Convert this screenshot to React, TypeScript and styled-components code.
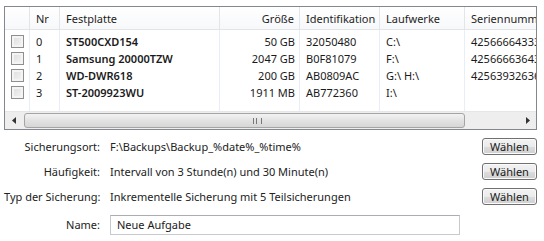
import styled, { createGlobalStyle } from "styled-components";

const Global = createGlobalStyle`
  html, body { margin: 0; padding: 0; background: #fff; }
  body { font-family: "Noto Sans", "Open Sans", sans-serif; font-size: 11px; color: #1a1a1a; }
`;

const Page = styled.div`
  width: 544px;
  height: 241px;
  padding: 6px 7px 0 4px;
  box-sizing: border-box;
  overflow: hidden;
`;

const ListBox = styled.div`
  height: 124px;
  border: 1px solid #828790;
  box-sizing: border-box;
  display: flex;
  flex-direction: column;
  overflow: hidden;
`;

const cols = "25px 30px 160px 80px 80px 85px 90px";

const HeaderRow = styled.div`
  display: grid;
  grid-template-columns: ${cols};
  height: 22px;
  background: linear-gradient(#ffffff, #f7f8fa);
  border-bottom: 1px solid #e2e4e8;
  flex-shrink: 0;
`;

const HeadCell = styled.div<{ $right?: boolean }>`
  display: flex;
  align-items: center;
  justify-content: ${(p) => (p.$right ? "flex-end" : "flex-start")};
  padding: 0 5px 0 6px;
  border-right: 1px solid #e3e5e8;
  color: #1e1e1e;
  white-space: nowrap;
  overflow: hidden;
`;

const Body = styled.div`
  flex: 1;
  padding-top: 3px;
  display: flex;
  flex-direction: column;
  position: relative;
`;

const Row = styled.div`
  display: grid;
  grid-template-columns: ${cols};
  height: 17px;
`;

const Cell = styled.div<{ $right?: boolean; $bold?: boolean }>`
  display: flex;
  align-items: center;
  justify-content: ${(p) => (p.$right ? "flex-end" : "flex-start")};
  padding: 0 5px 0 6px;
  font-weight: ${(p) => (p.$bold ? 600 : 400)};
  white-space: nowrap;
  overflow: hidden;
`;

const Guides = styled.div`
  position: absolute;
  inset: 0;
  display: grid;
  grid-template-columns: ${cols};
  pointer-events: none;
  & > div { border-right: 1px solid #e8eef8; }
`;

const Check = styled.span`
  width: 13px;
  height: 13px;
  box-sizing: border-box;
  border: 1px solid #8e8f8f;
  background: linear-gradient(135deg, #dcdcdc, #f6f6f6);
  box-shadow: inset 0 0 0 2px #f4f4f4;
  display: block;
`;

const CheckCell = styled.div`
  display: flex;
  align-items: center;
  padding-left: 6px;
`;

const HScroll = styled.div`
  height: 17px;
  flex-shrink: 0;
  background: #eeeeee;
  border-top: 1px solid #e6e6e6;
  display: flex;
  align-items: center;
`;

const Arrow = styled.div`
  width: 17px;
  height: 17px;
  display: flex;
  align-items: center;
  justify-content: center;
`;

const Thumb = styled.div`
  flex: 1;
  height: 15px;
  margin: 0 54px 0 2px;
  border: 1px solid #a4a4a4;
  border-radius: 3px;
  box-sizing: border-box;
  background: linear-gradient(#f3f3f3, #e2e2e2 50%, #d6d6d6);
  display: flex;
  align-items: center;
  justify-content: center;
`;

const Grip = styled.div`
  width: 7px;
  height: 6px;
  border-left: 1px solid #777;
  border-right: 1px solid #777;
  position: relative;
  margin-left: 25px;
  &::after {
    content: "";
    position: absolute;
    left: 2px;
    top: 0;
    height: 6px;
    border-left: 1px solid #777;
  }
`;

const Form = styled.div`
  display: grid;
  grid-template-columns: 96px 1fr 55px;
  column-gap: 10px;
  margin-top: 4px;
`;

const Label = styled.div<{ $h?: number }>`
  text-align: right;
  height: ${(p) => p.$h ?? 25}px;
  line-height: ${(p) => p.$h ?? 25}px;
  white-space: nowrap;
  color: #222;
`;

const Value = styled.div<{ $h?: number }>`
  height: ${(p) => p.$h ?? 25}px;
  line-height: ${(p) => p.$h ?? 25}px;
  white-space: nowrap;
  color: #222;
`;

const BtnCell = styled.div`
  display: flex;
  align-items: center;
`;

const Button = styled.button`
  width: 55px;
  height: 17px;
  padding: 0;
  font: inherit;
  color: #1a1a1a;
  border: 1px solid #707070;
  border-radius: 3px;
  background: linear-gradient(#f2f2f2, #ebebeb 50%, #dddddd 51%, #cfcfcf);
  box-shadow: inset 0 0 0 1px #fbfbfb;
`;

const InputCell = styled.div`
  height: 32px;
  display: flex;
  align-items: center;
`;

const Input = styled.div`
  width: 350px;
  height: 20px;
  box-sizing: border-box;
  border: 1px solid #c5c9d0;
  border-top-color: #abadb3;
  padding-left: 6px;
  line-height: 18px;
  color: #1a1a1a;
`;

const disks = [
  { nr: "0", name: "ST500CXD154", size: "50 GB", id: "32050480", drv: "C:\\", sn: "4256666433399" },
  { nr: "1", name: "Samsung 20000TZW", size: "2047 GB", id: "B0F81079", drv: "F:\\", sn: "4256666364312" },
  { nr: "2", name: "WD-DWR618", size: "200 GB", id: "AB0809AC", drv: "G:\\  H:\\", sn: "4256393263610" },
  { nr: "3", name: "ST-2009923WU", size: "1911 MB", id: "AB772360", drv: "I:\\", sn: "" },
];

export default function App() {
  return (
    <Page>
      <Global />
      <ListBox>
        <HeaderRow>
          <HeadCell />
          <HeadCell>Nr</HeadCell>
          <HeadCell>Festplatte</HeadCell>
          <HeadCell $right>Größe</HeadCell>
          <HeadCell>Identifikation</HeadCell>
          <HeadCell>Laufwerke</HeadCell>
          <HeadCell>Seriennummer</HeadCell>
        </HeaderRow>
        <Body>
          <Guides>
            <div /><div /><div /><div /><div /><div />
          </Guides>
          {disks.map((d) => (
            <Row key={d.nr}>
              <CheckCell>
                <Check />
              </CheckCell>
              <Cell>{d.nr}</Cell>
              <Cell $bold>{d.name}</Cell>
              <Cell $right>{d.size}</Cell>
              <Cell>{d.id}</Cell>
              <Cell>{d.drv}</Cell>
              <Cell>{d.sn}</Cell>
            </Row>
          ))}
        </Body>
        <HScroll>
          <Arrow>
            <svg width="4" height="7" viewBox="0 0 4 7">
              <path d="M4 0 L0 3.5 L4 7 Z" fill="#333" />
            </svg>
          </Arrow>
          <Thumb>
            <Grip />
          </Thumb>
          <Arrow>
            <svg width="4" height="7" viewBox="0 0 4 7">
              <path d="M0 0 L4 3.5 L0 7 Z" fill="#333" />
            </svg>
          </Arrow>
        </HScroll>
      </ListBox>
      <Form>
        <Label>Sicherungsort:</Label>
        <Value>F:\Backups\Backup_%date%_%time%</Value>
        <BtnCell>
          <Button>Wählen</Button>
        </BtnCell>
        <Label>Häufigkeit:</Label>
        <Value>Intervall von 3 Stunde(n) und 30 Minute(n)</Value>
        <BtnCell>
          <Button>Wählen</Button>
        </BtnCell>
        <Label>Typ der Sicherung:</Label>
        <Value>Inkrementelle Sicherung mit 5 Teilsicherungen</Value>
        <BtnCell>
          <Button>Wählen</Button>
        </BtnCell>
        <Label $h={32}>Name:</Label>
        <InputCell>
          <Input>Neue Aufgabe</Input>
        </InputCell>
        <div />
      </Form>
    </Page>
  );
}
